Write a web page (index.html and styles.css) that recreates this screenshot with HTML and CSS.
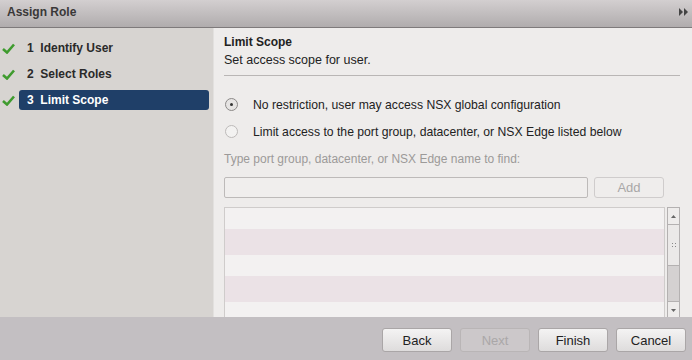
FILE: index.html
```html
<!DOCTYPE html>
<html lang="en">
<head>
    <meta charset="UTF-8">
    <title>Assign Role</title>
    <link rel="stylesheet" href="styles.css">
</head>
<body>

<div class="dialog">
    <div class="titlebar">
        <span class="title">Assign Role</span>
        <svg class="expand" width="9" height="8" viewBox="0 0 9 8"><path d="M0 0 L4 4 L0 8 Z M5 0 L9 4 L5 8 Z" fill="#444"/></svg>
    </div>
    <div class="main">
        <div class="steps">
            <div class="step">
                <svg class="check" width="13" height="11" viewBox="0 0 13 11"><path d="M1 6 L5 9.5 L12 1.5" stroke="#3f9b2e" stroke-width="2.6" fill="none"/></svg>
                <span class="step-label">1&nbsp; Identify User</span>
            </div>
            <div class="step">
                <svg class="check" width="13" height="11" viewBox="0 0 13 11"><path d="M1 6 L5 9.5 L12 1.5" stroke="#3f9b2e" stroke-width="2.6" fill="none"/></svg>
                <span class="step-label">2&nbsp; Select Roles</span>
            </div>
            <div class="step">
                <svg class="check" width="13" height="11" viewBox="0 0 13 11"><path d="M1 6 L5 9.5 L12 1.5" stroke="#3f9b2e" stroke-width="2.6" fill="none"/></svg>
                <span class="step-label active">3&nbsp; Limit Scope</span>
            </div>
        </div>
        <div class="content">
            <div class="header">
                <div class="heading">Limit Scope</div>
                <div class="subheading">Set access scope for user.</div>
            </div>
            <div class="option">
                <span class="radio checked"></span>
                <span>No restriction, user may access NSX global configuration</span>
            </div>
            <div class="option">
                <span class="radio"></span>
                <span>Limit access to the port group, datacenter, or NSX Edge listed below</span>
            </div>
            <div class="find-label">Type port group, datacenter, or NSX Edge name to find:</div>
            <div class="find-row">
                <div class="find-input"></div>
                <div class="btn add">Add</div>
            </div>
            <div class="list-row">
                <div class="list">
                    <div class="row"></div>
                    <div class="row alt"></div>
                    <div class="row"></div>
                    <div class="row alt"></div>
                    <div class="row"></div>
                </div>
                <div class="scrollbar">
                    <div class="arrow">
                        <svg width="5" height="3" viewBox="0 0 5 3"><path d="M0 3 L2.5 0 L5 3 Z" fill="#666"/></svg>
                    </div>
                    <div class="thumb">
                        <svg width="4" height="5" viewBox="0 0 4 5"><rect x="0" y="0" width="1" height="1" fill="#888"/><rect x="3" y="0" width="1" height="1" fill="#888"/><rect x="0" y="3" width="1" height="1" fill="#888"/><rect x="3" y="3" width="1" height="1" fill="#888"/></svg>
                    </div>
                    <div class="track"></div>
                    <div class="arrow">
                        <svg width="5" height="3" viewBox="0 0 5 3"><path d="M0 0 L2.5 3 L5 0 Z" fill="#666"/></svg>
                    </div>
                </div>
            </div>
        </div>
    </div>
    <div class="footer">
        <div class="btn">Back</div>
        <div class="btn disabled">Next</div>
        <div class="btn">Finish</div>
        <div class="btn">Cancel</div>
    </div>
</div>

</body>
</html>
```

FILE: styles.css
```css
body {
    margin: 0;
    font-family: 'Liberation Sans', Arial, sans-serif;
    font-size: 12px;
    color: #222;
    background: #c3bfc2;
}
.dialog {
    width: 692px;
    height: 360px;
    display: flex;
    flex-direction: column;
    overflow: hidden;
}
.titlebar {
    height: 24px;
    flex: none;
    display: flex;
    align-items: center;
    justify-content: space-between;
    padding: 0 4px 3px 7px;
    background: linear-gradient(to bottom, #d3cfd0, #b0acad);
    border-bottom: 1px solid #7e7a7b;
}
.title {
    font-weight: bold;
    color: #3a3838;
    font-size: 12px;
}
.main {
    flex: none;
    height: 289px;
    display: flex;
}
.steps {
    width: 214px;
    flex: none;
    background: #d7d4d1;
    padding-top: 7px;
    box-sizing: border-box;
    border-right: 1px solid #e2e0de;
}
.step {
    display: flex;
    align-items: center;
    height: 26px;
    padding-left: 2px;
}
.check {
    flex: none;
    margin-right: 4px;
}
.step-label {
    font-weight: bold;
    font-size: 12px;
    color: #2a2a2a;
    padding-left: 8px;
    height: 20px;
    line-height: 20px;
}
.step-label.active {
    flex: 1;
    margin-right: 4px;
    background: #1f3f68;
    color: #fff;
    border-radius: 3px;
}
.content {
    flex: 1;
    background: #eeeceb;
    padding: 6px 12px 0 10px;
    display: flex;
    flex-direction: column;
}
.content > * {
    flex: none;
}
.header {
    border-bottom: 1px solid #b9b6b5;
    padding-bottom: 7px;
    margin-bottom: 15px;
}
.heading {
    font-weight: bold;
    line-height: 16px;
}
.subheading {
    line-height: 16px;
    margin-top: 2px;
    font-size: 12.5px;
}
.option {
    display: flex;
    align-items: center;
    height: 27px;
    padding-left: 1px;
    font-size: 12.2px;
}
.radio {
    width: 11px;
    height: 11px;
    border: 1px solid #bdbab9;
    border-radius: 50%;
    background: #f3f2f1;
    margin-right: 15px;
    display: flex;
    align-items: center;
    justify-content: center;
}
.radio.checked {
    border-color: #8c8988;
    background: #e6e4e3;
}
.radio.checked::after {
    content: '';
    width: 3px;
    height: 3px;
    border-radius: 50%;
    background: #333;
}
.find-label {
    color: #9c9a99;
    margin-top: 6px;
    line-height: 16px;
}
.find-row {
    display: flex;
    gap: 6px;
    margin-top: 10px;
}
.find-input {
    width: 362px;
    height: 19px;
    border: 1px solid #bdbab9;
    border-radius: 2px;
    background: #f0eeed;
}
.btn {
    width: 68px;
    height: 22px;
    border: 1px solid #aaa6a7;
    border-radius: 3px;
    background: linear-gradient(to bottom, #f4f3f3, #dedcdc);
    display: flex;
    align-items: center;
    justify-content: center;
    font-size: 13px;
    color: #222;
}
.btn.add {
    width: 68px;
    height: 19px;
    color: #a9a7a7;
    border-color: #cfcccc;
    background: #efedec;
}
.content > .list-row {
    display: flex;
    gap: 2px;
    margin-top: 9px;
    flex: 1;
}
.list {
    width: 439px;
    border: 1px solid #cfcccb;
    border-bottom: none;
    background: #f3f1f1;
}
.row {
    height: 21px;
}
.row.alt {
    height: 26px;
    background: #ebe2e6;
}
.scrollbar {
    width: 11px;
    border: 1px solid #b4b1b1;
    display: flex;
    flex-direction: column;
    background: #d4d1d1;
    margin-bottom: 4px;
}
.arrow {
    height: 16px;
    display: flex;
    align-items: center;
    justify-content: center;
    background: #eeeceb;
}
.thumb {
    height: 40px;
    border-top: 1px solid #b4b1b1;
    border-bottom: 1px solid #b4b1b1;
    background: #ebe9e8;
    display: flex;
    align-items: center;
    justify-content: center;
}
.track {
    flex: 1;
    border-bottom: 1px solid #b4b1b1;
}
.footer {
    flex: 1;
    display: flex;
    justify-content: flex-end;
    align-items: center;
    gap: 8px;
    padding: 3px 6px 0 0;
    background: #c3bfc2;
}
.btn.disabled {
    color: #aaa7a8;
    border-color: #b9b5b6;
    background: #ccc8ca;
}
```
